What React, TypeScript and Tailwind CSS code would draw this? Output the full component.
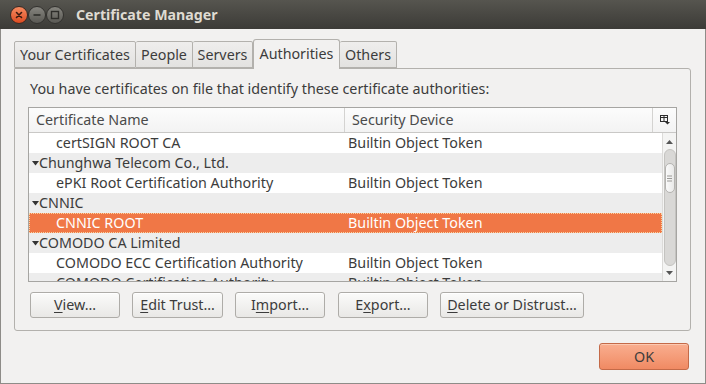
import React from "react";

const font = { fontFamily: '"Noto Sans", "Open Sans", sans-serif' };

type Row = { name: string; dev?: string; group?: boolean; selected?: boolean };

const rows: Row[] = [
  { name: "certSIGN ROOT CA", dev: "Builtin Object Token" },
  { name: "Chunghwa Telecom Co., Ltd.", group: true },
  { name: "ePKI Root Certification Authority", dev: "Builtin Object Token" },
  { name: "CNNIC", group: true },
  { name: "CNNIC ROOT", dev: "Builtin Object Token", selected: true },
  { name: "COMODO CA Limited", group: true },
  { name: "COMODO ECC Certification Authority", dev: "Builtin Object Token" },
  { name: "COMODO Certification Authority", dev: "Builtin Object Token" },
];

function Expander() {
  return (
    <svg width="7" height="6" viewBox="0 0 7 6" className="shrink-0">
      <path d="M0 1 L7 1 L3.5 5.5 Z" fill="#333333" />
    </svg>
  );
}

function Btn({ children, w }: { children: React.ReactNode; w: string }) {
  return (
    <div
      className={`${w} h-[26px] flex items-center justify-center rounded-[3px] border border-[#aeaca8] bg-gradient-to-b from-[#fbfbfa] to-[#e9e8e6] text-[14.3px] text-[#3c3c3c] shadow-[inset_0_1px_0_#ffffff]`}
    >
      {children}
    </div>
  );
}

function U({ c }: { c: string }) {
  return <span className="underline underline-offset-2">{c}</span>;
}

function WinBtn({ kind }: { kind: "close" | "min" | "max" }) {
  if (kind === "close") {
    return (
      <div className="w-[18px] h-[18px] rounded-full bg-gradient-to-b from-[#f68a5f] to-[#dc4a1f] border border-[#3a2a24] flex items-center justify-center">
        <svg width="8" height="8" viewBox="0 0 8 8">
          <path d="M1.5 1.5 L6.5 6.5 M6.5 1.5 L1.5 6.5" stroke="#3a1a10" strokeWidth="1.6" strokeLinecap="round" />
        </svg>
      </div>
    );
  }
  return (
    <div className="w-[18px] h-[18px] rounded-full bg-gradient-to-b from-[#86857f] to-[#5a5954] border border-[#33322f] flex items-center justify-center">
      {kind === "min" ? (
        <svg width="10" height="10" viewBox="0 0 10 10">
          <path d="M1.5 5 L8.5 5" stroke="#2e2d2a" strokeWidth="1.6" />
        </svg>
      ) : (
        <svg width="10" height="10" viewBox="0 0 10 10">
          <rect x="1.5" y="1.5" width="7" height="7" fill="none" stroke="#2e2d2a" strokeWidth="1.4" />
        </svg>
      )}
    </div>
  );
}

export default function App() {
  const tabs = [
    { t: "Your Certificates", w: "w-[122px]" },
    { t: "People", w: "w-[57px]" },
    { t: "Servers", w: "w-[60px]" },
    { t: "Authorities", w: "w-[87px]", active: true },
    { t: "Others", w: "w-[57px]" },
  ];
  return (
    <div style={font} className="w-[706px] h-[384px] flex flex-col bg-[#f2f1f0] text-[#3c3c3c] overflow-hidden">
      {/* Title bar */}
      <div className="h-[29px] shrink-0 flex items-center bg-gradient-to-b from-[#56554f] to-[#3c3b37] pl-[10px]">
        <div className="flex items-center">
          <WinBtn kind="close" />
          <WinBtn kind="min" />
          <WinBtn kind="max" />
        </div>
        <div className="ml-[12px] text-[14.2px] font-bold text-[#dfdbd2]">Certificate Manager</div>
      </div>

      <div className="flex-1 flex flex-col border-x border-b border-[#8e8c88]">
        {/* Tabs */}
        <div className="mt-[10px] ml-[13px] flex items-end h-[29px]">
          {tabs.map((tb) => (
            <div
              key={tb.t}
              className={
                tb.active
                  ? `${tb.w} h-[30px] -mb-[1px] z-10 flex items-center justify-center rounded-t-[3px] border border-b-0 border-[#b3b1ad] bg-[#f2f1f0] text-[14.3px] pb-[2px]`
                  : `${tb.w} h-[27px] flex items-center justify-center rounded-t-[2px] border border-l-0 first:border-l border-[#b3b1ad] bg-gradient-to-b from-[#efeeed] to-[#e3e2e0] text-[14.3px]`
              }
            >
              {tb.t}
            </div>
          ))}
        </div>

        {/* Notebook panel */}
        <div className="ml-[13px] mr-[14px] h-[263px] border border-[#b3b1ad] rounded-b-[3px] rounded-tr-[3px] bg-[#f2f1f0] px-[13px] flex flex-col">
          <div className="mt-[11px] ml-[2px] text-[14.3px] leading-[17px] h-[17px]">
            You have certificates on file that identify these certificate authorities:
          </div>

          {/* Tree view */}
          <div className="mt-[10px] h-[175px] border border-[#a6a5a2] bg-white flex flex-col overflow-hidden">
            <div className="h-[25px] shrink-0 flex items-center border-b border-[#c9c8c6] bg-gradient-to-b from-[#fcfcfc] to-[#f3f3f3] text-[14.3px] text-[#4a4a4a]">
              <div className="w-[316px] pl-[7px] border-r border-[#d4d3d1] h-full flex items-center">Certificate Name</div>
              <div className="flex-1 pl-[7px] h-full flex items-center">Security Device</div>
              <div className="w-[24px] h-full flex items-center justify-center border-l border-[#d4d3d1]">
                <svg width="10" height="10" viewBox="0 0 10 10">
                  <rect x="0.5" y="0.5" width="7" height="6" fill="none" stroke="#2d2d2d" />
                  <path d="M0.5 2.5 H7.5 M4 0.5 V6.5" stroke="#2d2d2d" />
                  <path d="M5 7 L10 7 L7.5 9.5 Z" fill="#2d2d2d" />
                </svg>
              </div>
            </div>
            <div className="flex-1 flex overflow-hidden">
              <div className="flex-1 flex flex-col overflow-hidden">
                {rows.map((r, i) => {
                  const bg = r.selected ? "bg-[#f07746] text-white" : i % 2 === 0 ? "bg-white" : "bg-[#ededed]";
                  return (
                    <div
                      key={i}
                      className={`h-[20px] shrink-0 flex items-center text-[14.3px] leading-[20px] ${bg} ${r.selected ? "outline outline-1 outline-dotted outline-[#f9d4a3] -outline-offset-1" : ""}`}
                    >
                      <div className="w-[316px] flex items-center whitespace-nowrap">
                        {r.group ? (
                          <div className="flex items-center pl-[3px]">
                            <Expander />
                            <span>{r.name}</span>
                          </div>
                        ) : (
                          <span className="pl-[27px]">{r.name}</span>
                        )}
                      </div>
                      <div className="pl-[3px] whitespace-nowrap">{r.dev ?? ""}</div>
                    </div>
                  );
                })}
              </div>
              {/* Scrollbar */}
              <div className="w-[14px] shrink-0 bg-[#f4f4f3] border-l border-[#dcdbd9] flex flex-col items-center py-[1px]">
                <div className="w-[12px] h-[15px] flex items-center justify-center">
                  <svg width="7" height="4" viewBox="0 0 7 4"><path d="M0 4 L7 4 L3.5 0 Z" fill="#555" /></svg>
                </div>
                <div className="w-[12px] flex-1 rounded-[6px] bg-[#d9d8d6] border border-[#c4c3c0] flex flex-col">
                  <div className="mt-[13px] h-[30px] rounded-[6px] bg-gradient-to-r from-[#fafafa] to-[#e9e9e8] border border-[#b4b3b0] flex items-center justify-center">
                    <svg width="5" height="7" viewBox="0 0 5 7"><path d="M0 1 H5 M0 3.5 H5 M0 6 H5" stroke="#9b9a97" /></svg>
                  </div>
                </div>
                <div className="w-[12px] h-[14px] flex items-center justify-center">
                  <svg width="7" height="4" viewBox="0 0 7 4"><path d="M0 0 L7 0 L3.5 4 Z" fill="#555" /></svg>
                </div>
              </div>
            </div>
          </div>

          {/* Buttons */}
          <div className="mt-[10px] ml-[2px] flex">
            <Btn w="w-[90px]"><U c="V" />iew…</Btn>
            <div className="w-[12px]" />
            <Btn w="w-[91px]"><U c="E" />dit Trust…</Btn>
            <div className="w-[12px]" />
            <Btn w="w-[90px]">I<U c="m" />port…</Btn>
            <div className="w-[13px]" />
            <Btn w="w-[90px]">E<U c="x" />port…</Btn>
            <div className="w-[12px]" />
            <Btn w="w-[144px]"><U c="D" />elete or Distrust…</Btn>
          </div>
        </div>

        {/* OK */}
        <div className="flex justify-end mr-[16px] mt-[12px]">
          <div className="w-[90px] h-[27px] flex items-center justify-center rounded-[3px] border border-[#c46a48] bg-gradient-to-b from-[#f9ae8f] to-[#f08a63] text-[14.3px] text-[#3c3c3c] shadow-[inset_0_1px_0_#fcc9b2]">
            OK
          </div>
        </div>
      </div>
    </div>
  );
}
